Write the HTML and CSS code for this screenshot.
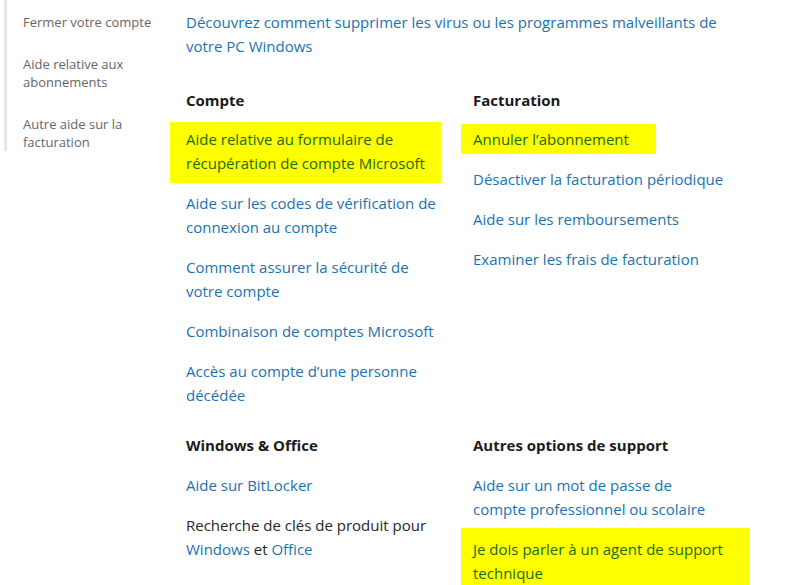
FILE: index.html
```html
<!DOCTYPE html>
<html lang="fr">
<head>
<meta charset="utf-8">
<link rel="stylesheet" href="styles.css">
</head>
<body>
<div class="page">
  <aside class="sidebar">
    <a class="side-link">Fermer votre compte</a>
    <a class="side-link">Aide relative aux abonnements</a>
    <a class="side-link">Autre aide sur la facturation</a>
  </aside>
  <main class="main">
    <a class="link intro">Découvrez comment supprimer les virus ou les programmes malveillants de votre PC Windows</a>
    <div class="grid">
      <section class="group">
        <h3 class="heading">Compte</h3>
        <a class="link item hl hl-a">Aide relative au formulaire de récupération de compte Microsoft</a>
        <a class="link item">Aide sur les codes de vérification de connexion au compte</a>
        <a class="link item">Comment assurer la sécurité de votre compte</a>
        <a class="link item">Combinaison de comptes Microsoft</a>
        <a class="link item">Accès au compte d’une personne décédée</a>
      </section>
      <section class="group">
        <h3 class="heading">Facturation</h3>
        <a class="link item hl hl-b">Annuler l’abonnement</a>
        <a class="link item">Désactiver la facturation périodique</a>
        <a class="link item">Aide sur les remboursements</a>
        <a class="link item">Examiner les frais de facturation</a>
      </section>
      <section class="group">
        <h3 class="heading heading-low">Windows &amp; Office</h3>
        <a class="link item">Aide sur BitLocker</a>
        <p class="item plain">Recherche de clés de produit pour <a class="link">Windows</a> et <a class="link">Office</a></p>
      </section>
      <section class="group">
        <h3 class="heading heading-low">Autres options de support</h3>
        <a class="link item">Aide sur un mot de passe de compte professionnel ou scolaire</a>
        <a class="link item hl hl-c">Je dois parler à un agent de support technique</a>
      </section>
    </div>
  </main>
</div>
</body>
</html>
```
FILE: styles.css
```css
* { box-sizing: border-box; }
html, body { margin: 0; padding: 0; background: #fff; }
body {
  font-family: "Open Sans", "Noto Sans", "Liberation Sans", sans-serif;
  overflow: hidden;
  height: 585px;
}
.page {
  display: flex;
  align-items: flex-start;
}
.sidebar {
  width: 178px;
  margin-left: 4px;
  border-left: 3px solid #e6e6e6;
  padding: 13px 0 0 16px;
  display: flex;
  flex-direction: column;
  gap: 24px;
  flex: none;
}
.side-link {
  font-size: 13px;
  line-height: 18px;
  color: #666;
  width: 132px;
}
.main {
  width: 566px;
  padding-top: 10px;
  margin-left: 4px;
  font-size: 15px;
  line-height: 24px;
}
.link { color: #1a72b4; text-decoration: none; }
.intro { display: block; width: 560px; }
.grid {
  display: grid;
  grid-template-columns: 287px 280px;
  row-gap: 10px;
  margin-top: 30px;
}
.group {
  display: flex;
  flex-direction: column;
  align-items: flex-start;
}
.heading {
  margin: 0 0 15px;
  font-size: 15px;
  line-height: 24px;
  font-weight: 700;
  color: #1b1b1b;
}
.heading-low { margin-bottom: 16px; }
.item {
  display: block;
  margin: 0 0 16px;
  width: 253px;
}
.plain { color: #262626; }
.hl {
  background: #ffff00;
  color: #1c6a0c;
}
.hl-a {
  margin: -5px 0 8px -16px;
  padding: 5px 0 8px 16px;
  width: 271px;
}
.hl-b {
  margin: -3px 0 13px -12px;
  padding: 3px 0 3px 12px;
  width: 195px;
}
.hl-c {
  margin: -9px 0 0 -12px;
  padding: 9px 0 12px 12px;
  width: 289px;
}
```
